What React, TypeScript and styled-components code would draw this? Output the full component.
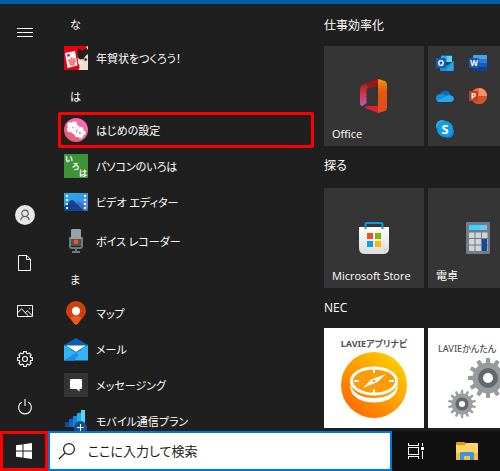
import React from "react";
import styled, { createGlobalStyle, css } from "styled-components";

const GlobalStyle = createGlobalStyle`
  *, *::before, *::after { box-sizing: border-box; }
  body {
    margin: 0;
    background: #1f1f1f;
    color: #fff;
    font-family: "Open Sans", "Noto Sans CJK JP", sans-serif;
    font-size: 12px;
    line-height: 16px;
    font-feature-settings: "palt";
  }
  svg { display: block; flex: none; }
`;

const Screen = styled.div`
  display: grid;
  grid-template-rows: 4px minmax(0, 1fr) 40px;
  height: 100vh;
  overflow: hidden;
`;

const DesktopEdge = styled.div`
  background: #005ba5;
`;

const StartMenu = styled.main`
  display: grid;
  grid-template-columns: 50px 264px minmax(0, 1fr);
  min-height: 0;
  overflow: hidden;
  background: #1f1f1f;
`;

const Rail = styled.nav`
  display: flex;
  flex-direction: column;
  padding-top: 5px;
  min-height: 0;
`;

const RailButton = styled.button`
  display: flex;
  align-items: center;
  justify-content: center;
  height: 48px;
  flex: none;
  padding: 0;
  border: 0;
  background: none;
  color: #fff;
`;

const RailSpacer = styled.div`
  flex: 1;
`;

const AppList = styled.div`
  min-height: 0;
  overflow: hidden;
  padding-left: 8px;
`;

const Letter = styled.h2`
  height: 36px;
  margin: 0;
  padding: 13px 0 0 12px;
  font-size: 11px;
  font-weight: 400;
  line-height: 16px;
`;

const AppRow = styled.button<{ $marked?: boolean; $spaced?: boolean }>`
  display: flex;
  align-items: center;
  gap: 8px;
  width: 100%;
  height: ${(p) => (p.$spaced ? "39px" : "36px")};
  padding: ${(p) => (p.$spaced ? "3px" : "0")} 3px 0;
  border: 3px solid transparent;
  border-width: 0 3px;
  border-radius: 2px;
  background: none;
  color: #fff;
  font: inherit;
  font-size: 11px;
  font-feature-settings: inherit;
  text-align: left;
  white-space: nowrap;
  ${(p) =>
    p.$marked &&
    css`
      border: 3px solid #fe0000;
    `}
`;

const IconSlot = styled.span`
  display: flex;
  align-items: center;
  justify-content: center;
  width: 24px;
  height: 24px;
`;

const AppName = styled.span`
  padding-top: 2px;
`;

const TilePane = styled.div`
  padding: 3px 0 0 10px;
  min-width: 0;
  overflow: hidden;
`;

const GroupTitle = styled.h2<{ $gap: number }>`
  margin: 0 0 ${(p) => p.$gap}px;
  font-size: 12px;
  font-weight: 400;
  line-height: 38px;
  white-space: nowrap;
`;

const TileRow = styled.div<{ $after?: number }>`
  display: flex;
  gap: 4px;
  padding-bottom: ${(p) => p.$after ?? 0}px;
`;

const Tile = styled.button<{ $light?: boolean }>`
  display: grid;
  grid-template: 1fr / 1fr;
  flex: none;
  width: 100px;
  height: 100px;
  padding: 0;
  border: 0;
  background: ${(p) => (p.$light ? "#fff" : "#353535")};
  color: #fff;
  font: inherit;
  font-feature-settings: inherit;

  & > * { grid-area: 1 / 1; }
  & > svg { place-self: center; }
`;

const TileLabel = styled.span`
  place-self: end start;
  padding: 0 0 4px 8px;
  font-size: 11px;
  white-space: nowrap;
`;

const FolderTile = styled(Tile)`
  grid-template: repeat(3, 33px) / repeat(3, 33px);
  place-content: center;

  & > * { grid-area: auto; }
`;

const PosterTile = styled(Tile)<{ $top: number }>`
  display: flex;
  flex-direction: column;
  align-items: center;
  padding-top: ${(p) => p.$top}px;
  color: #505356;
`;

const PosterText = styled.span<{ $bold?: boolean }>`
  ${(p) => !p.$bold && "align-self: flex-start; padding-left: 10px;"}
  font-family: "Noto Sans", "Noto Sans CJK JP", sans-serif;
  font-size: 9px;
  font-weight: ${(p) => (p.$bold ? 700 : 500)};
  line-height: 16px;
  white-space: nowrap;
`;

const Taskbar = styled.footer`
  display: flex;
  background: #101010;
`;

const TaskButton = styled.button<{ $marked?: boolean }>`
  display: flex;
  align-items: center;
  justify-content: center;
  width: 48px;
  flex: none;
  padding: 0;
  border: ${(p) => (p.$marked ? "3px solid #fe0000" : "0")};
  background: ${(p) => (p.$marked ? "#1f1f1f" : "none")};
`;

const TaskButtons = styled.div`
  display: flex;
  gap: 3px;
  width: 108px;
`;

const SearchBox = styled.label`
  display: flex;
  align-items: center;
  gap: 12px;
  flex: 1;
  min-width: 0;
  padding-left: 8px;
  border: 2px solid #0078d7;
  background: #fff;
`;

const SearchInput = styled.input`
  flex: 1;
  min-width: 0;
  padding: 0;
  border: 0;
  outline: 0;
  background: none;
  color: #1a1a1a;
  font-family: "Open Sans", "Noto Sans CJK JP", sans-serif;
  font-size: 13px;
  line-height: 20px;
  font-feature-settings: "palt";

  &::placeholder { color: #1a1a1a; opacity: 1; }
`;

const polar = (cx: number, cy: number, r: number, a: number) =>
  `${(cx + r * Math.cos(a)).toFixed(2)} ${(cy + r * Math.sin(a)).toFixed(2)}`;

function gearPath(cx: number, cy: number, outer: number, inner: number, teeth: number, tip = 0.2, root = 0.27) {
  const step = (Math.PI * 2) / teeth;
  const points: string[] = [];
  for (let i = 0; i < teeth; i++) {
    const a = i * step - Math.PI / 2;
    points.push(
      polar(cx, cy, inner, a - step * root),
      polar(cx, cy, outer, a - step * tip),
      polar(cx, cy, outer, a + step * tip),
      polar(cx, cy, inner, a + step * root)
    );
  }
  return `M${points.join("L")}Z`;
}

const MenuIcon = () => (
  <svg width="16" height="10" viewBox="0 0 16 10" fill="#fff" shapeRendering="crispEdges">
    <path d="M0 0h16v1H0zM0 4h16v1H0zM0 8h16v1H0z" />
  </svg>
);

const UserIcon = () => (
  <svg width="20" height="20" viewBox="0 0 20 20" fill="none">
    <circle cx="10" cy="10" r="10" fill="#e6e6e6" />
    <circle cx="10" cy="8.3" r="3.2" stroke="#555" strokeWidth="1.1" />
    <path d="M5.8 15.2c.2-2.4 1.8-3.7 4.2-3.7s4 1.3 4.2 3.7" stroke="#555" strokeWidth="1.1" />
  </svg>
);

const DocumentIcon = () => (
  <svg width="14" height="16" viewBox="0 0 14 16" fill="none" stroke="#fff">
    <path d="M.5.5h8.3l3.7 3.8v11.2H.5z M8.5.5v4h4" />
  </svg>
);

const PicturesIcon = () => (
  <svg width="16" height="12" viewBox="0 0 16 12" fill="none" stroke="#fff">
    <path d="M.5.5h15v11H.5z M.8 7.5 4.6 3.8l6.6 7 M8.2 7.8l2.1-2 4.9 4.7" />
    <path d="M12 3h1v1h-1z" fill="#fff" stroke="none" />
  </svg>
);

const SettingsIcon = () => (
  <svg width="16" height="16" viewBox="0 0 16 16" fill="none" stroke="#fff" strokeWidth="1.1" strokeLinejoin="round">
    <path d={gearPath(8, 8, 7.5, 5.9, 8, 0.24, 0.34)} />
    <circle cx="8" cy="8" r="2.5" />
  </svg>
);

const PowerIcon = () => (
  <svg width="16" height="16" viewBox="0 0 16 16" fill="none" stroke="#fff" strokeWidth="1.1">
    <path d="M4.9 2.9a6.4 6.4 0 1 0 6.2 0M8 0v7" />
  </svg>
);

const NewYearIcon = () => (
  <svg width="24" height="24" viewBox="0 0 24 24">
    <path fill="#e60012" d="M0 0h24v24H0z" />
    <path fill="#fff" d="m1 7 10-2 2.5 14.5L3.5 22z" />
    <path fill="#e60012" d="m3 8.5 2.5-.5.4 2.2-2.5.5z" />
    <g fill="#ef8088">
      <circle cx="5.4" cy="14.4" r="1.5" />
      <circle cx="7.5" cy="12.8" r="1.4" />
      <circle cx="10" cy="13.4" r="1.5" />
      <circle cx="8.2" cy="17" r="3" />
      <circle cx="11" cy="15.5" r="1.1" />
    </g>
    <path fill="#e8e4d4" d="M13.5 10 16 5l8-2v21h-9.5c2-3 .5-4.5-.5-7z" />
    <path fill="#2a1b1b" d="m14 2 4 2.5L24 1v7l-2.5 2-2 3-3.5.5-2.5-2z" />
    <path fill="#e8e4d4" d="m22 1 2-1v4z" />
    <circle cx="21.4" cy="13.5" r="2" fill="#8a9197" />
    <circle cx="21.6" cy="13.5" r="1" fill="#111" />
    <path fill="#e60012" d="m14 18 1.5 1-1 1z" />
  </svg>
);

const Blossom = ({ x, y, r }: { x: number; y: number; r: number }) => (
  <g>
    {[0, 1, 2, 3, 4].map((i) => {
      const a = (i * Math.PI * 2) / 5 - 1.2;
      return (
        <circle key={i} cx={x + r * 0.62 * Math.cos(a)} cy={y + r * 0.62 * Math.sin(a)} r={r * 0.44} fill="#fff" />
      );
    })}
    <circle cx={x} cy={y} r={r * 0.3} fill="#fff" />
    <circle cx={x} cy={y} r="1" fill="#f0a0bf" />
  </g>
);

const SetupIcon = () => (
  <svg width="24" height="24" viewBox="0 0 24 24">
    <defs>
      <linearGradient id="setup" x1="1" y1="0" x2="0.2" y2="1">
        <stop offset="0" stopColor="#ff74c0" />
        <stop offset="1" stopColor="#e8586f" />
      </linearGradient>
    </defs>
    <circle cx="12" cy="12" r="12" fill="url(#setup)" />
    <Blossom x={15.8} y={14.8} r={5.6} />
    <Blossom x={9} y={9.5} r={6.2} />
    <path d="m13.5 11.5-1.5 3M15 14l1.5 2" stroke="#f06596" fill="none" />
  </svg>
);

const IrohaIcon = () => (
  <svg width="24" height="24" viewBox="0 0 24 24">
    <path fill="#3f9337" d="M0 0h24v24H0z" />
    <g fill="#fff" fontFamily="'Noto Sans CJK JP', sans-serif" fontSize="8" fontWeight="700">
      <text x="1" y="8">い</text>
      <text x="8" y="15">ろ</text>
      <text x="15" y="22">は</text>
    </g>
  </svg>
);

const VideoIcon = () => (
  <svg width="24" height="18" viewBox="0 0 24 18">
    <defs>
      <linearGradient id="video" x1="0" y1="0" x2="1" y2="1">
        <stop offset="0" stopColor="#20b4f0" />
        <stop offset="0.45" stopColor="#2c9ae4" />
        <stop offset="1" stopColor="#7b83eb" />
      </linearGradient>
    </defs>
    <path fill="url(#video)" d="M0 0h24v18H0z" />
    <path fill="#3d6fd0" d="m10 12 5.5-4 8.5 8v2H12z" />
    <path fill="#15428c" d="M0 14 6.5 7.5q1.5-1 3 0L20 18H0z" />
    <path
      fill="#fff"
      d="M2 2h2v2H2zM2 6h2v2H2zM2 10h2v2H2zM2 14h2v2H2zM20 2h2v2h-2zM20 6h2v2h-2zM20 10h2v2h-2zM20 14h2v2h-2z"
    />
  </svg>
);

const RecorderIcon = () => (
  <svg width="16" height="24" viewBox="0 0 16 24">
    <path fill="#9aa1a8" d="M3 1q0-1 1-1h8q1 0 1 1v9H3z" />
    <path fill="#4b5259" d="M3 10h10v7H3z" />
    <path fill="none" stroke="#71797f" strokeWidth="2" d="M2 8v9q0 2 2 2h8q2 0 2-2V8" />
    <path fill="#71797f" d="M7 19h2v3h3v2H4v-2h3z" />
    <circle cx="8" cy="13" r="2.4" fill="#f4511e" />
  </svg>
);

const MapsIcon = () => (
  <svg width="20" height="24" viewBox="0 0 20 24">
    <path fill="#d33f0c" d="M10 0a10 10 0 0 1 10 10c0 5-4.5 7.5-8 12.5q-2 2-4 0C4.5 17.5 0 15 0 10A10 10 0 0 1 10 0z" />
    <path fill="#ec5a1c" d="M4.5 17Q10 12.5 15.5 17L12 22.5q-2 2-4 0z" />
    <circle cx="10" cy="10" r="4.2" fill="#fff" />
  </svg>
);

const MailIcon = () => (
  <svg width="24" height="23" viewBox="0 0 24 23">
    <path fill="#0f5fb0" d="M0 7 12 0l12 7v4H0z" />
    <path fill="#2eb6f5" d="M0 7l12 7.5L24 7v15.5H0z" />
    <path fill="#1f8ee6" d="M0 22.5 12 14.5l3 2.5-5 5.5z" />
    <path fill="#fff" d="M2 7.5h20l-10 6.5z" />
  </svg>
);

const MessagingIcon = () => (
  <svg width="24" height="24" viewBox="0 0 24 24">
    <path fill="#353535" d="M0 0h24v24H0z" />
    <path fill="#fff" d="M7 6h10q1 0 1 1v8q0 1-1 1h-1.5v2.5L12.5 16H7q-1 0-1-1V7q0-1 1-1z" />
  </svg>
);

const MobilePlanIcon = () => (
  <svg width="22" height="24" viewBox="0 0 22 24">
    <path fill="#164a8c" d="M0 13h5v5H0z" />
    <path fill="#0f66bd" d="M4 10h5v8H4z" />
    <path fill="#1187dc" d="M8 7h5v11H8z" />
    <path fill="#26abe8" d="M12 4h5v14h-5z" />
    <path fill="#50d9f7" d="M16 1h4v17h-4z" />
    <circle cx="15.5" cy="18.5" r="6.5" fill="#1e4d8e" />
    <path stroke="#fff" d="M12 18.5h7M15.5 15v7" />
  </svg>
);

const OfficeIcon = () => (
  <svg width="28" height="34" viewBox="0 0 28 34">
    <defs>
      <linearGradient id="officeLeft" x1="0" y1="0" x2="0" y2="1">
        <stop offset="0" stopColor="#9d1111" />
        <stop offset="0.55" stopColor="#cf3848" />
        <stop offset="1" stopColor="#b65bb8" />
      </linearGradient>
      <linearGradient id="officeRight" x1="0" y1="0" x2="0" y2="1">
        <stop offset="0" stopColor="#f39a12" />
        <stop offset="0.35" stopColor="#e8590c" />
        <stop offset="1" stopColor="#e04a1a" />
      </linearGradient>
    </defs>
    <path fill="url(#officeLeft)" d="M18 0 3 5.5Q0 7 0 10v14q0 3 2.5 3l4-3V11q0-1.5 1.5-2l10-2.500z" />
    <path fill="#9d1414" d="M18 0 6 4.5 9 9l9-2.500z" />
    <path fill="#dc1f32" d="M6 27h12v7L6.5 29.500q-2-1-.5-2.500z" />
    <path fill="url(#officeRight)" d="m18 0 7 2q2 1 2 4v22q0 3-2 4l-7 2z" />
  </svg>
);

const OutlookIcon = () => (
  <svg width="18" height="16" viewBox="0 0 18 16">
    <path fill="#1066b5" d="M5 0h11v7H5z" />
    <path fill="#32a9e7" d="M5 1h5.5v6H5z" />
    <path fill="#50d9ff" d="M10.5 1H16v6h-5.5z" />
    <path fill="#1490df" d="M4 6l7 4.5L17.500 6v9q0 1-1 1H5q-1 0-1-1z" />
    <path fill="#28a8ea" d="M17.5 6v9q0 1-1 1H10z" />
    <rect y="3" width="10" height="10" rx="1" fill="#0f5fb5" />
    <ellipse cx="5" cy="8" rx="2.2" ry="2.4" fill="none" stroke="#fff" strokeWidth="1.4" />
  </svg>
);

const WordIcon = () => (
  <svg width="18" height="16" viewBox="0 0 18 16">
    <path fill="#41a5ee" d="M4 1q0-1 1-1h12q1 0 1 1v3H4z" />
    <path fill="#2b7cd3" d="M4 4h14v4H4z" />
    <path fill="#185abd" d="M4 8h14v4H4z" />
    <path fill="#103f91" d="M4 12h14v3q0 1-1 1H5q-1 0-1-1z" />
    <rect y="3" width="10" height="10" rx="1" fill="#1a58b8" />
    <text x="5" y="11" textAnchor="middle" fill="#fff" fontFamily="Open Sans, sans-serif" fontSize="8" fontWeight="700">W</text>
  </svg>
);

const OneDriveIcon = () => (
  <svg width="18" height="12" viewBox="0 0 18 12">
    <path fill="#0f68bd" d="M4 4.5a5.5 5.5 0 0 1 9.5-2L15 5.500l-7 3z" />
    <path fill="#1490df" d="M4 4Q0 4.5 0 8q0 4 4 4L14 6.500l-6-2q-2-1-4-.5z" />
    <path fill="#28a8ea" d="M4 12Q1.5 12 1 10.5L11 6q2-1.500 4-.5 2.5.5 3 3-.5 3.500-4 3.500z" />
  </svg>
);

const PowerPointIcon = () => (
  <svg width="18" height="16" viewBox="0 0 18 16">
    <circle cx="10" cy="8" r="8" fill="#ed6c47" />
    <path fill="#ff8f6b" d="M10 0a8 8 0 0 1 8 8h-8z" />
    <path fill="#d35230" d="M18 8a8 8 0 0 1-16 0z" />
    <rect y="3" width="9" height="10" rx="1" fill="#c33f20" />
    <text x="4.5" y="11" textAnchor="middle" fill="#fff" fontFamily="Open Sans, sans-serif" fontSize="8" fontWeight="700">P</text>
  </svg>
);

const SkypeIcon = () => (
  <svg width="18" height="18" viewBox="0 0 18 18">
    <circle cx="6" cy="6" r="6" fill="#28b2ee" />
    <circle cx="12" cy="12" r="6" fill="#0a84d8" />
    <circle cx="9" cy="9" r="8" fill="#129ce4" />
    <text x="9" y="13.5" textAnchor="middle" fill="#fff" fontFamily="Open Sans, sans-serif" fontSize="13" fontWeight="700">S</text>
  </svg>
);

const StoreIcon = () => (
  <svg width="32" height="32" viewBox="0 0 32 32">
    <defs>
      <linearGradient id="bag" x1="0" y1="0" x2="0" y2="1">
        <stop offset="0" stopColor="#fff" />
        <stop offset="1" stopColor="#dcdcdc" />
      </linearGradient>
    </defs>
    <path fill="url(#bag)" d="M1 5h30v21q0 6-6 6H7q-6 0-6-6z" />
    <path fill="none" stroke="#1496e0" strokeWidth="2" d="M7.5 7V2q0-1 1-1h15q1 0 1 1v5" />
    <path fill="#f25022" d="M9 11h6v6H9z" />
    <path fill="#7fba00" d="M17 11h6v6h-6z" />
    <path fill="#00a4ef" d="M9 19h6v6H9z" />
    <path fill="#ffb900" d="M17 19h6v6h-6z" />
  </svg>
);

const CalculatorIcon = () => (
  <svg width="24" height="32" viewBox="0 0 24 32">
    <rect width="24" height="32" rx="1" fill="#727c86" />
    <path fill="#3bd5ff" d="M3 3h18v5H3z" />
    <path fill="#65c9f5" d="m12 8 5-5h4v5z" />
    <g fill="#d0d5da">
      {[10.5, 17, 23.5].map((y) =>
        [3, 9.5, 16].map((x) => <rect key={`${x}-${y}`} x={x} y={y} width="5.5" height="5.5" rx="0.5" />)
      )}
    </g>
    <path fill="#134a94" d="M16 17h5v12h-5z" />
  </svg>
);

const CompassIcon = () => (
  <svg width="66" height="66" viewBox="0 0 66 66">
    <defs>
      <linearGradient id="compass" x1="0.9" y1="0.1" x2="0.2" y2="0.85">
        <stop offset="0" stopColor="#ffd000" />
        <stop offset="0.55" stopColor="#ff9d00" />
        <stop offset="1" stopColor="#ff7200" />
      </linearGradient>
    </defs>
    <circle cx="33" cy="33" r="33" fill="url(#compass)" />
    <path fill="#fff" d="M9.5 32c2 10 12 14 23.5 14s21.5-4 23.5-14v5c-2 9-12 13.5-23.5 13.5S11.5 46 9.5 37z" />
    <ellipse cx="33" cy="29" rx="22.5" ry="13" fill="#ff9a08" stroke="#fff" strokeWidth="3" />
    <path stroke="#fff" strokeWidth="2" d="M33 16v5M33 37v5M13 29h5M48 29h5" />
    <path fill="#fff" d="m22 36 8-8.5 15-5.5-8.5 8z" />
    <circle cx="33" cy="29" r="1.3" fill="#ff9a00" />
  </svg>
);

const GearsIcon = () => (
  <svg width="62" height="62" viewBox="0 0 62 62">
    <path fill="#979b9e" d={gearPath(41, 21, 20, 15.5, 12, 0.19)} />
    <circle cx="41" cy="21" r="7.5" fill="#fff" stroke="#64686b" strokeWidth="5" />
    <path fill="#9b9ea1" d={gearPath(15, 47, 14, 10.5, 14, 0.19)} />
    <circle cx="15" cy="47" r="4.8" fill="#fff" stroke="#64686b" strokeWidth="3.5" />
  </svg>
);

const WindowsIcon = () => (
  <svg width="16" height="16" viewBox="0 0 16 16" fill="#fff">
    <path d="M0 2.3 6.5 1.4v6.1H0zM7.5 1.2 16 0v7.5H7.5zM0 8.5h6.5v6.1L0 13.7zM7.5 8.5H16V16l-8.5-1.2z" />
  </svg>
);

const SearchIcon = () => (
  <svg width="18" height="18" viewBox="0 0 18 18" fill="none" stroke="#1a1a1a" strokeWidth="1.2">
    <circle cx="11" cy="7" r="5.4" />
    <path d="M7.2 10.8 1 17" />
  </svg>
);

const TaskViewIcon = () => (
  <svg width="16" height="16" viewBox="0 0 16 16" fill="none" stroke="#fff" shapeRendering="crispEdges">
    <path d="M.5 0v2.5h10V0M.5 4.5h10v7H.5zM.5 16v-2.5h10V16M14.5 0v3M14.5 8v8" />
    <path fill="#fff" stroke="none" d="M13 4h3v3h-3z" />
  </svg>
);

const FolderIcon = () => (
  <svg width="22" height="18" viewBox="0 0 22 18">
    <path fill="#e39a0a" d="M0 1q0-1 1-1h7l2 1v3H0z" />
    <path fill="#ffd666" d="M0 3h9l1-2h11q1 0 1 1v16H0z" />
    <path fill="#f3bf45" d="M0 11h22v7H0z" />
    <path fill="#3b96dc" d="M4 11q0-1 1-1h12q1 0 1 1v7h-4v-4H8v4H4z" />
  </svg>
);

type AppEntry = { name: string; icon: React.ReactNode; marked?: boolean; spaced?: boolean };

const appGroups: { letter: string; apps: AppEntry[] }[] = [
  { letter: "な", apps: [{ name: "年賀状をつくろう！", icon: <NewYearIcon /> }] },
  {
    letter: "は",
    apps: [
      { name: "はじめの設定", icon: <SetupIcon />, marked: true },
      { name: "パソコンのいろは", icon: <IrohaIcon /> },
      { name: "ビデオ エディター", icon: <VideoIcon /> },
      { name: "ボイス レコーダー", icon: <RecorderIcon />, spaced: true },
    ],
  },
  {
    letter: "ま",
    apps: [
      { name: "マップ", icon: <MapsIcon /> },
      { name: "メール", icon: <MailIcon /> },
      { name: "メッセージング", icon: <MessagingIcon /> },
      { name: "モバイル通信プラン", icon: <MobilePlanIcon /> },
    ],
  },
];

export default function App() {
  return (
    <Screen>
      <GlobalStyle />
      <DesktopEdge />
      <StartMenu>
        <Rail aria-label="スタート">
          <RailButton aria-label="メニュー"><MenuIcon /></RailButton>
          <RailSpacer />
          <RailButton aria-label="ユーザー"><UserIcon /></RailButton>
          <RailButton aria-label="ドキュメント"><DocumentIcon /></RailButton>
          <RailButton aria-label="ピクチャ"><PicturesIcon /></RailButton>
          <RailButton aria-label="設定"><SettingsIcon /></RailButton>
          <RailButton aria-label="電源"><PowerIcon /></RailButton>
        </Rail>

        <AppList>
          {appGroups.map((group) => (
            <section key={group.letter}>
              <Letter>{group.letter}</Letter>
              {group.apps.map((app) => (
                <AppRow key={app.name} $marked={app.marked} $spaced={app.spaced}>
                  <IconSlot>{app.icon}</IconSlot>
                  <AppName>{app.name}</AppName>
                </AppRow>
              ))}
            </section>
          ))}
        </AppList>

        <TilePane>
          <section>
            <GroupTitle $gap={1}>仕事効率化</GroupTitle>
            <TileRow $after={1}>
              <Tile>
                <OfficeIcon />
                <TileLabel>Office</TileLabel>
              </Tile>
              <FolderTile aria-label="Office アプリ">
                <OutlookIcon />
                <WordIcon />
                <span />
                <OneDriveIcon />
                <PowerPointIcon />
                <span />
                <SkypeIcon />
              </FolderTile>
            </TileRow>
          </section>
          <section>
            <GroupTitle $gap={3}>探る</GroupTitle>
            <TileRow $after={1}>
              <Tile>
                <StoreIcon />
                <TileLabel>Microsoft Store</TileLabel>
              </Tile>
              <Tile>
                <CalculatorIcon />
                <TileLabel>電卓</TileLabel>
              </Tile>
            </TileRow>
          </section>
          <section>
            <GroupTitle $gap={1}>NEC</GroupTitle>
            <TileRow>
              <PosterTile $light $top={8}>
                <PosterText $bold>LAVIEアプリナビ</PosterText>
                <CompassIcon />
              </PosterTile>
              <PosterTile $light $top={13}>
                <PosterText>LAVIEかんたん</PosterText>
                <GearsIcon />
              </PosterTile>
            </TileRow>
          </section>
        </TilePane>
      </StartMenu>

      <Taskbar>
        <TaskButton $marked aria-label="スタート"><WindowsIcon /></TaskButton>
        <SearchBox>
          <SearchIcon />
          <SearchInput type="text" placeholder="ここに入力して検索" aria-label="ここに入力して検索" />
        </SearchBox>
        <TaskButtons>
          <TaskButton aria-label="タスク ビュー"><TaskViewIcon /></TaskButton>
          <TaskButton aria-label="エクスプローラー"><FolderIcon /></TaskButton>
        </TaskButtons>
      </Taskbar>
    </Screen>
  );
}
